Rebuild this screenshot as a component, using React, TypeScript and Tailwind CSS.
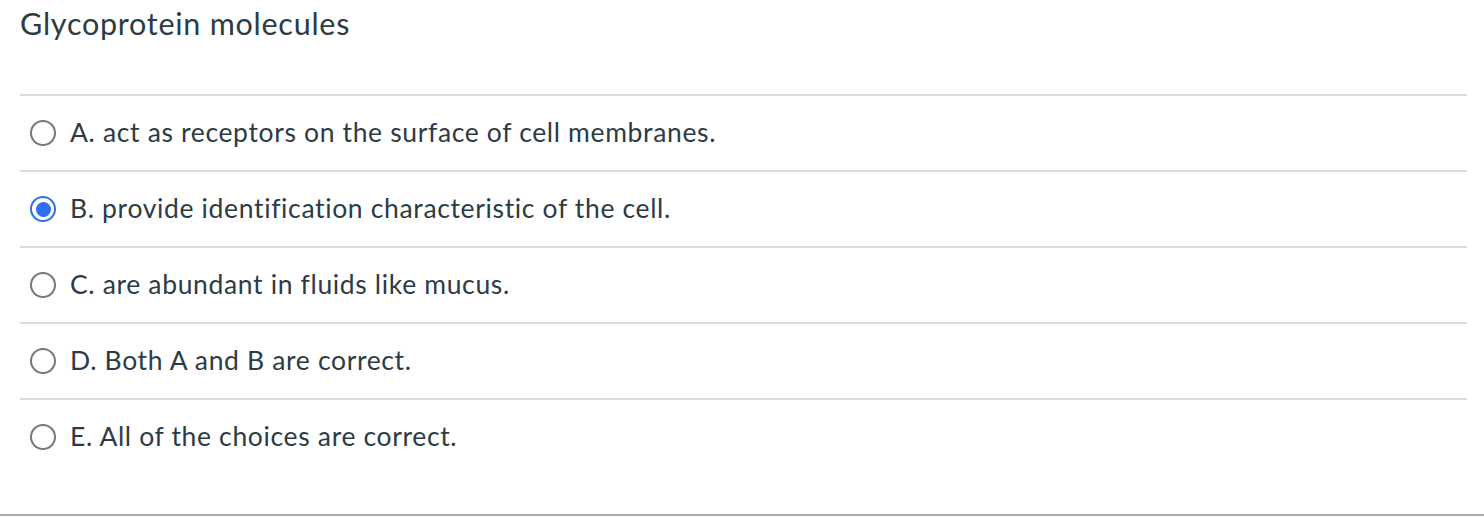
const answers = [
  { id: 'a', label: 'A. act as receptors on the surface of cell membranes.' },
  { id: 'b', label: 'B. provide identification characteristic of the cell.' },
  { id: 'c', label: 'C. are abundant in fluids like mucus.' },
  { id: 'd', label: 'D. Both A and B are correct.' },
  { id: 'e', label: 'E. All of the choices are correct.' },
]

function Radio({ checked }: { checked: boolean }) {
  if (checked) {
    return (
      <span className="flex items-center justify-center w-[26px] h-[26px] rounded-full border-[2.5px] border-[#2f6ff2] bg-white">
        <span className="w-[15px] h-[15px] rounded-full bg-[#2f6ff2]" />
      </span>
    )
  }
  return <span className="block w-[26px] h-[26px] rounded-full border-2 border-[#6f7a83] bg-white" />
}

export default function App() {
  const selected = 'b'
  return (
    <div className="w-[1484px] h-[518px] bg-white overflow-hidden">
      <div
        className="h-[516px] text-[#2d3b45] border-b-2 border-[#a9a9a9]"
        style={{ fontFamily: 'Lato, "Noto Sans", sans-serif' }}
      >
        <div className="h-[94px] pl-[20px] pt-[4px]">
          <h2 className="text-[30.5px] leading-[38px] font-normal tracking-[0.75px]">Glycoprotein molecules</h2>
        </div>

        <div className="ml-[20px] w-[1447px]">
          {answers.map((a) => (
            <div key={a.id} className="h-[76px] border-t-2 border-[#dcdcdc] flex items-center pl-[10px] gap-[14px]">
              <Radio checked={a.id === selected} />
              <span className="text-[26.5px] leading-[30px] tracking-[0.65px] -mt-[3px]">{a.label}</span>
            </div>
          ))}
        </div>
      </div>
    </div>
  )
}
